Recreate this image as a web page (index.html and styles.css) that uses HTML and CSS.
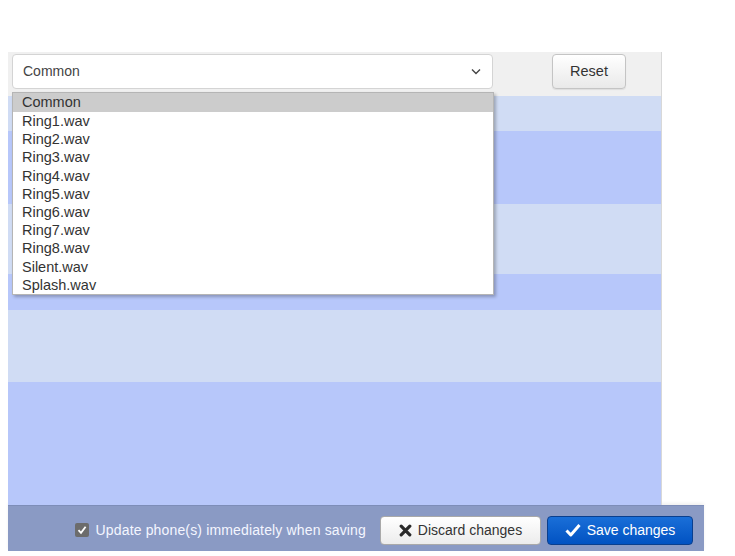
FILE: index.html
```
<!DOCTYPE html>
<html>
<head>
  <meta charset="utf-8">
  <title>Ring tones</title>
  <link rel="stylesheet" href="styles.css">
</head>
<body>
  <div class="page">
    <div class="panel">
      <div class="panel-head">
        <div class="select-box">
          <span class="select-value">Common</span>
          <svg class="chevron" width="10" height="7" viewBox="0 0 10 7"><path d="M1 1.5 L5 5.5 L9 1.5" fill="none" stroke="#444" stroke-width="1.4"/></svg>
        </div>
        <button class="btn-reset" type="button">Reset</button>
      </div>

      <div class="rows">
        <div class="row light" style="height: 35px"></div>
        <div class="row blue" style="height: 73px"></div>
        <div class="row light" style="height: 70px"></div>
        <div class="row blue" style="height: 36px"></div>
        <div class="row light" style="height: 72px"></div>
        <div class="row blue" style="height: 123px"></div>
      </div>

      <ul class="dropdown">
        <li class="selected">Common</li>
        <li>Ring1.wav</li>
        <li>Ring2.wav</li>
        <li>Ring3.wav</li>
        <li>Ring4.wav</li>
        <li>Ring5.wav</li>
        <li>Ring6.wav</li>
        <li>Ring7.wav</li>
        <li>Ring8.wav</li>
        <li>Silent.wav</li>
        <li>Splash.wav</li>
      </ul>
    </div>

    <div class="footer">
      <label class="update-label">
        <span class="fake-check">
          <svg width="10" height="10" viewBox="0 0 10 10"><path d="M1.5 5.2 L4 7.8 L8.6 1.8" fill="none" stroke="#fff" stroke-width="1.8"/></svg>
        </span>
        Update phone(s) immediately when saving
      </label>
      <button class="btn btn-discard" type="button">
        <svg width="13" height="13" viewBox="0 0 13 13"><path d="M2.2 2.2 L10.8 10.8 M10.8 2.2 L2.2 10.8" stroke="#2a2a2a" stroke-width="3.2" stroke-linecap="round"/></svg>
        Discard changes
      </button>
      <button class="btn btn-save" type="button">
        <svg width="16" height="14" viewBox="0 0 16 14"><path d="M1.5 7.5 L5.8 12 L14.5 2" fill="none" stroke="#fff" stroke-width="3" stroke-linejoin="round"/></svg>
        Save changes
      </button>
    </div>
  </div>
</body>
</html>
```

FILE: styles.css
```
body {
    margin: 0;
    background-color: #fff;
    font-family: "Liberation Sans", Arial, sans-serif;
    color: #333;
}
.page {
    padding: 52px 0 0 8px;
}
.panel {
    position: relative;
    width: 653px;
    border-right: 1px solid #d8d8d8;
}
.panel-head {
    display: flex;
    align-items: center;
    height: 44px;
    padding: 0 35px 0 4px;
    background-color: #f0f0f0;
    box-sizing: border-box;
}
.select-box {
    display: flex;
    align-items: center;
    justify-content: space-between;
    width: 481px;
    height: 35px;
    margin-top: -6px;
    padding: 0 11px 0 10px;
    box-sizing: border-box;
    background-color: #fff;
    border: 1px solid #d4d4d4;
    border-radius: 4px;
    font-size: 14px;
    color: #444;
}
.btn-reset {
    margin-left: auto;
    margin-top: -6px;
    width: 74px;
    height: 35px;
    font-family: inherit;
    font-size: 14.5px;
    color: #333;
    background: linear-gradient(#ffffff, #e9e9e9);
    border: 1px solid #c4c4c4;
    border-radius: 4px;
    box-shadow: 0 1px 1px rgba(0, 0, 0, 0.08);
}
.rows {
    display: flex;
    flex-direction: column;
}
.row.light {
    background-color: #d0dcf4;
}
.row.blue {
    background-color: #b7c7fa;
}
.dropdown {
    position: absolute;
    left: 4px;
    top: 40px;
    width: 480px;
    margin: 0;
    padding: 0;
    list-style: none;
    background-color: #fff;
    border: 1px solid #b5b5b5;
    box-shadow: 2px 2px 3px rgba(0, 0, 0, 0.25);
    font-size: 14.5px;
    color: #333;
}
.dropdown li {
    height: 18.2px;
    line-height: 18.2px;
    padding-left: 9px;
}
.dropdown li.selected {
    background-color: #cccccc;
    height: 19px;
}
.footer {
    display: flex;
    align-items: center;
    justify-content: flex-end;
    gap: 6px;
    width: 696px;
    height: 46px;
    padding: 3px 11px 0 0;
    box-sizing: border-box;
    background-color: #8a9ac4;
    border-top: 1px solid #7d8db8;
    box-shadow: 0 -2px 3px rgba(0, 0, 0, 0.06);
}
.update-label {
    display: flex;
    align-items: center;
    gap: 7px;
    margin-right: 8px;
    font-size: 14px;
    letter-spacing: 0.15px;
    color: #f4f6ff;
}
.fake-check {
    display: flex;
    align-items: center;
    justify-content: center;
    width: 14px;
    height: 14px;
    background-color: #6c6c6c;
    border-radius: 2px;
}
.btn {
    display: flex;
    align-items: center;
    justify-content: center;
    gap: 6px;
    height: 29px;
    font-family: inherit;
    font-size: 14px;
    border-radius: 4px;
}
.btn-discard {
    width: 161px;
    color: #333;
    background: linear-gradient(#ffffff, #ececec);
    border: 1px solid #a9a9a9;
}
.btn-save {
    width: 146px;
    color: #fff;
    background: linear-gradient(#1a6fd8, #0152c2);
    border: 1px solid #0a3f8e;
}
```
